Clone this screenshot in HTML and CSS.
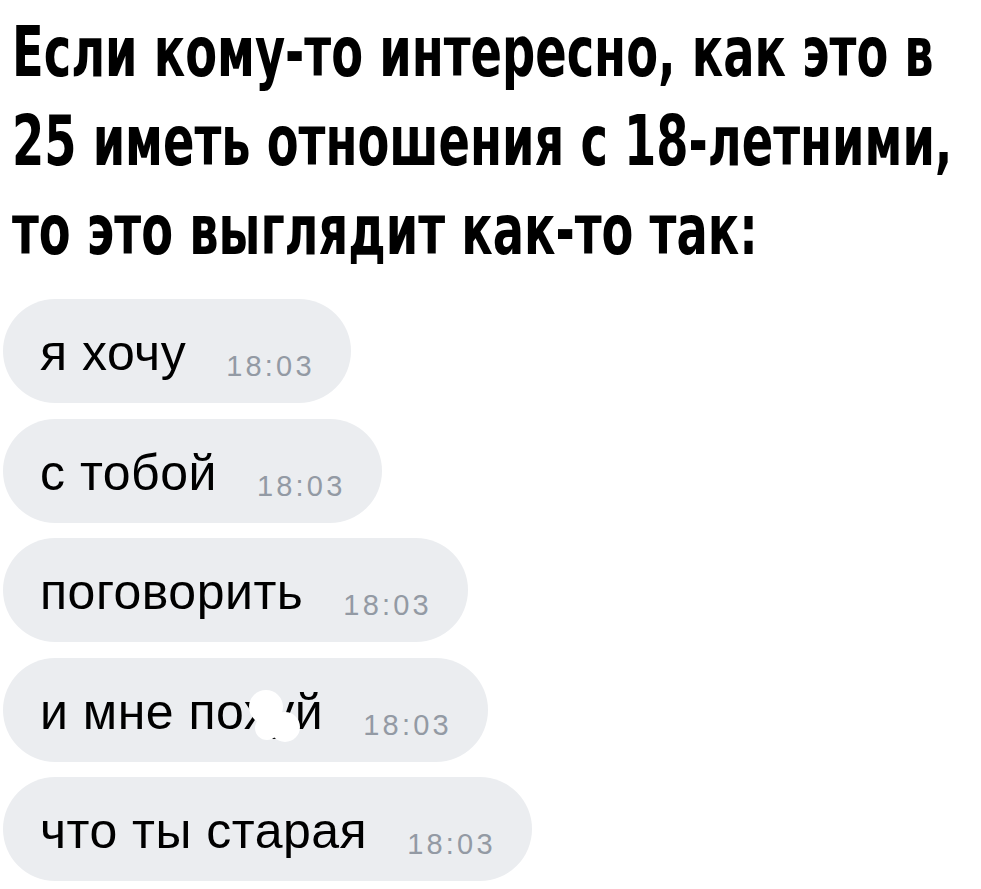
FILE: index.html
```html
<!DOCTYPE html>
<html lang="ru">
<head>
    <meta charset="UTF-8">
    <title>Сообщения</title>
    <link rel="stylesheet" href="styles.css">
</head>
<body>
    <h1 class="title">
        <span class="line">Если кому-то интересно, как это в</span>
        <span class="line">25 иметь отношения с 18-летними,</span>
        <span class="line">то это выглядит как-то так:</span>
    </h1>

    <div class="chat">
        <div class="msg"><span class="text">я хочу</span><span class="time">18:03</span></div>
        <div class="msg"><span class="text">с тобой</span><span class="time">18:03</span></div>
        <div class="msg"><span class="text">поговорить</span><span class="time">18:03</span></div>
        <div class="msg"><span class="text censored">и мне похуй<span class="blot"></span></span><span class="time">18:03</span></div>
        <div class="msg"><span class="text">что ты старая</span><span class="time">18:03</span></div>
    </div>
</body>
</html>
```

FILE: styles.css
```css
body { margin: 0; background: #fff; color: #000; font-family: "Liberation Sans", Arial, sans-serif; }

.title { margin: 0; padding: 8px 0 0 12px; font-family: "DejaVu Sans", sans-serif; font-stretch: condensed; font-weight: bold; font-size: 70px; line-height: 89px; }
.title .line { display: block; white-space: nowrap; transform: scaleX(0.736); transform-origin: 0 0; }

.chat { display: flex; flex-direction: column; align-items: flex-start; gap: 15.5px; padding: 24px 0 0 3px; }
.msg { display: flex; align-items: flex-start; gap: 40px; box-sizing: border-box; height: 104px; padding: 29px 36px 0 37px; background: #ebedf0; border-radius: 52px; }
.text { font-size: 50px; line-height: 50px; letter-spacing: 0.5px; }
.time { font-size: 29px; line-height: 29px; margin-top: 24px; letter-spacing: 3.2px; color: #939aa4; }

/* white smudge over the swear word */
.censored { position: relative; }
.blot { position: absolute; left: 209px; top: 3px; width: 34px; height: 34px; background: #fff; border-radius: 50%; }
.blot::before, .blot::after { content: ""; position: absolute; background: #fff; border-radius: 50%; }
.blot::before { left: 21px; top: 22px; width: 30px; height: 30px; }
.blot::after { left: 6px; top: 26px; width: 24px; height: 24px; }
```
